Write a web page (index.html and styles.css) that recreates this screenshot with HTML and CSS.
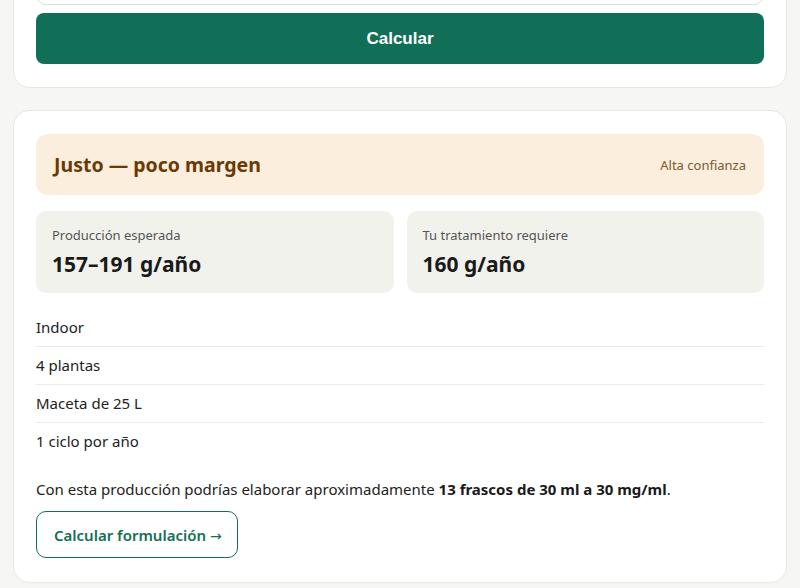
FILE: index.html
```html
<!DOCTYPE html>
<html lang="es">
<head>
<meta charset="utf-8">
<link rel="stylesheet" href="styles.css">
</head>
<body>
<main class="page">
  <section class="card form-card">
    <div class="input"></div>
    <button class="btn-primary">Calcular</button>
  </section>
  <section class="card result-card">
    <div class="banner">
      <span class="banner-title">Justo — poco margen</span>
      <span class="banner-note">Alta confianza</span>
    </div>
    <div class="stats">
      <div class="stat">
        <div class="stat-label">Producción esperada</div>
        <div class="stat-value">157–191 g/año</div>
      </div>
      <div class="stat">
        <div class="stat-label">Tu tratamiento requiere</div>
        <div class="stat-value">160 g/año</div>
      </div>
    </div>
    <ul class="details">
      <li>Indoor</li>
      <li>4 plantas</li>
      <li>Maceta de 25 L</li>
      <li>1 ciclo por año</li>
    </ul>
    <p class="summary">Con esta producción podrías elaborar aproximadamente <strong>13 frascos de 30 ml a 30 mg/ml</strong>.</p>
    <button class="btn-outline">Calcular formulación <span class="arrow">→</span></button>
  </section>
</main>
</body>
</html>
```
FILE: styles.css
```css
* { box-sizing: border-box; }
html, body { margin: 0; padding: 0; }
body {
  background: #f6f6f4;
  font-family: "Noto Sans", "Open Sans", sans-serif;
  color: #1f1f1f;
  overflow: hidden;
}
.page {
  display: flex;
  flex-direction: column;
  gap: 22px;
  padding: 0 13px;
  margin-top: -63px;
}
.card {
  background: #fff;
  border: 1px solid #e7e7e3;
  border-radius: 16px;
  padding: 23px 22px;
}
.form-card {
  display: flex;
  flex-direction: column;
  gap: 8px;
}
.input {
  height: 44px;
  border: 1px solid #dcdcd8;
  border-radius: 10px;
}
.btn-primary {
  height: 51px;
  border: none;
  border-radius: 8px;
  background: #126f57;
  color: #fff;
  font-family: "Liberation Sans", Arial, sans-serif;
  font-weight: bold;
  font-size: 17px;
  cursor: pointer;
}
.result-card {
  display: flex;
  flex-direction: column;
  padding-bottom: 24px;
}
.banner {
  height: 61px;
  background: #fbeedc;
  border-radius: 12px;
  display: flex;
  align-items: center;
  justify-content: space-between;
  padding: 0 18px;
}
.banner-title {
  font-weight: 700;
  font-size: 19.5px;
  color: #6a3a06;
}
.banner-note {
  font-size: 13px;
  color: #7c5b31;
}
.stats {
  display: grid;
  grid-template-columns: 1fr 1fr;
  gap: 13px;
  margin-top: 16px;
}
.stat {
  background: #f2f2ec;
  border-radius: 10px;
  height: 82px;
  padding: 15px 16px;
}
.stat-label {
  font-size: 13px;
  color: #555;
  line-height: 18px;
}
.stat-value {
  font-size: 21px;
  font-weight: 700;
  color: #1a1a1a;
  margin-top: 7px;
  line-height: 26px;
}
.details {
  list-style: none;
  margin: 16px 0 0;
  padding: 0;
}
.details li {
  font-size: 15px;
  line-height: 37px;
  border-bottom: 1px solid #ebebe7;
  color: #222;
}
.details li:last-child { border-bottom: none; }
.summary {
  font-size: 15px;
  margin: 17px 0 0;
  line-height: 24px;
  color: #222;
}
.summary strong { font-weight: 700; color: #1a1a1a; }
.btn-outline {
  align-self: flex-start;
  margin-top: 10px;
  height: 47px;
  padding: 0 15px 0 17px;
  background: #fff;
  border: 1px solid #126f57;
  border-radius: 10px;
  color: #126f57;
  font-family: "Noto Sans", "Open Sans", sans-serif;
  font-weight: 600;
  font-size: 15px;
  cursor: pointer;
}
.arrow {
  font-family: "DejaVu Sans", sans-serif;
  font-weight: 400;
  font-size: 14px;
}
```
